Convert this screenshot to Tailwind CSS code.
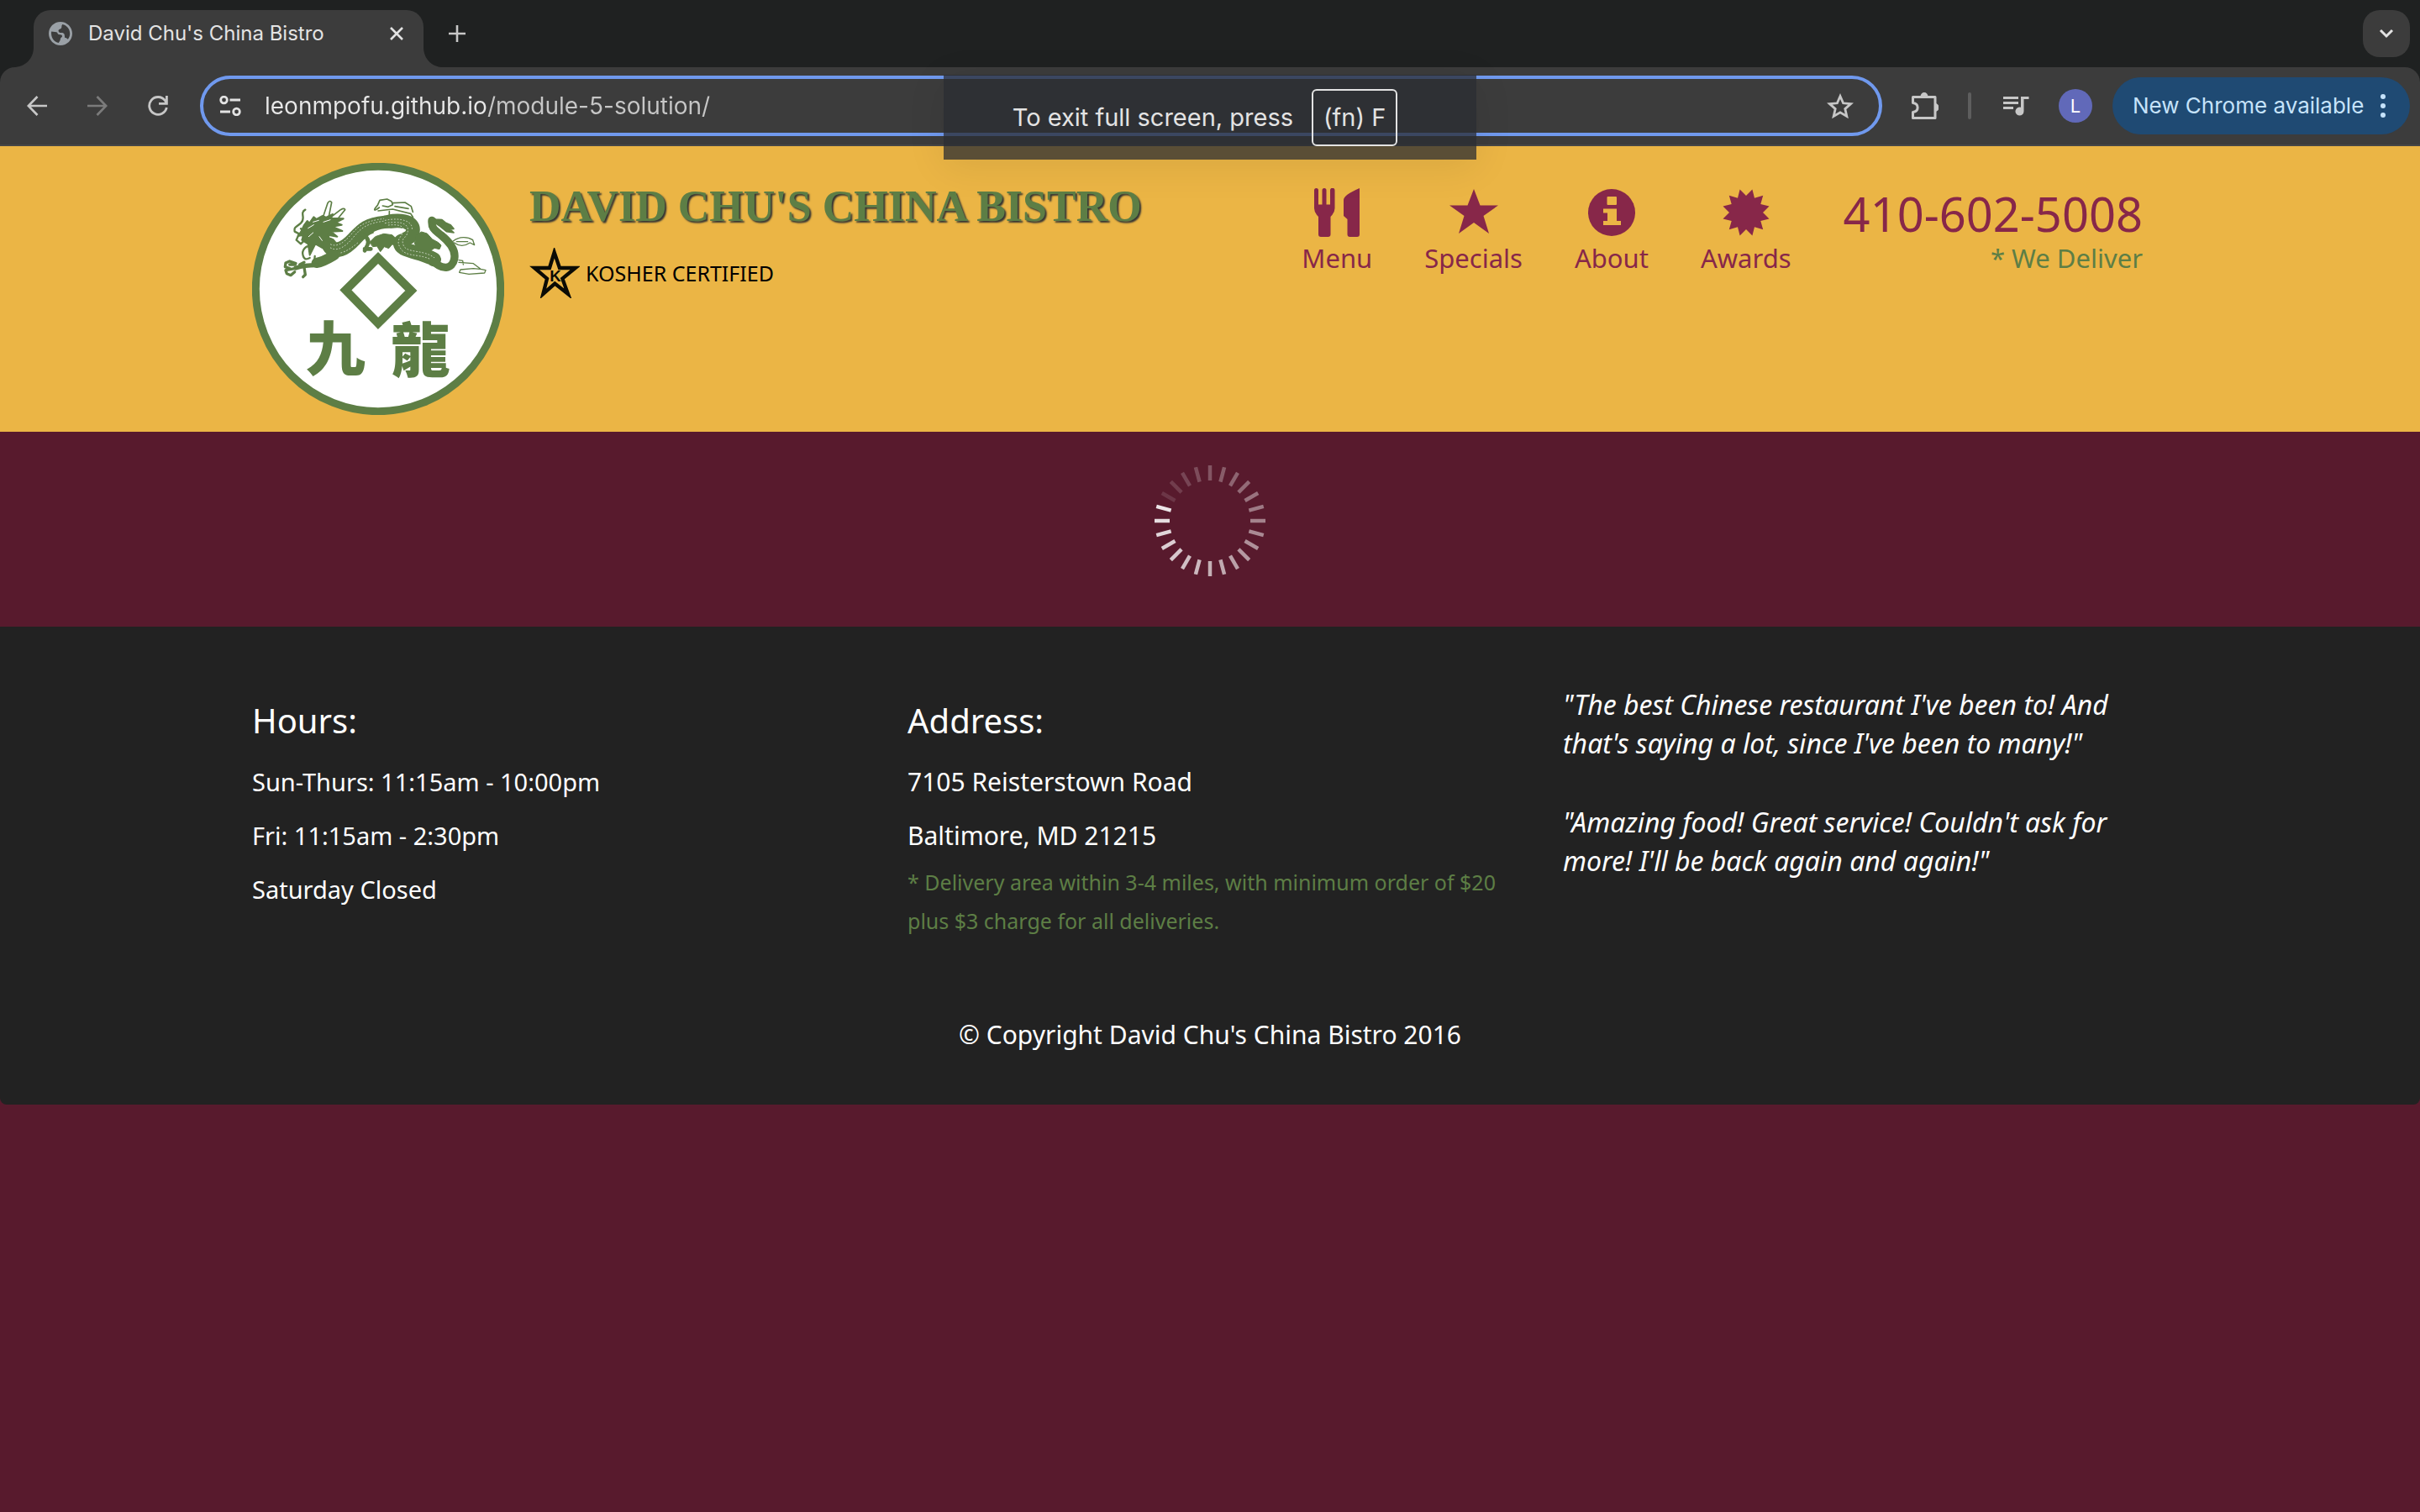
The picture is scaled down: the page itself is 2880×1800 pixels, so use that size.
<!DOCTYPE html>
<html lang="en">
<head>
<meta charset="utf-8">
<meta name="viewport" content="width=device-width, initial-scale=1">
<title>David Chu's China Bistro</title>
<script src="https://cdn.jsdelivr.net/npm/@tailwindcss/browser@4"></script>
</head>
<body class="relative min-h-screen bg-[#581a2d] font-['Noto_Sans',sans-serif] text-[30px] leading-[46px] text-white">

<!-- Browser chrome -->
<div class="bg-[#1f2121] font-['Inter',sans-serif]">
  <div class="flex h-20 items-end pl-4 pr-3">
    <svg class="h-6 w-6 shrink-0" viewBox="0 0 24 24" fill="#3c3c3c"><path d="M24 0v24H0C14 24 24 14 24 0z"/></svg>
    <div class="flex h-[68px] w-[464px] items-center rounded-t-[20px] bg-[#3c3c3c] pl-[18px] pr-4 pb-3">
      <svg class="h-7 w-7 shrink-0" viewBox="2 2 20 20" fill="#9aa0a6"><path d="M12 2C6.48 2 2 6.48 2 12s4.48 10 10 10 10-4.48 10-10S17.52 2 12 2zM4.200 12.300C4.100 11.600 4.100 11 4.300 10.200L8.600 10.700C9.600 11 9.500 12.600 10.600 12.800L12.600 13C13.600 13.300 13.800 14.600 12.800 15.300C11.700 16 12 17 11.700 17.800L10.400 19.800C7 19.200 4.400 16.200 4.200 12.300zM18.200 16.900C17.400 15.800 16.600 15.400 15.800 15.500C15.300 14 15.900 12.500 14.400 11.600C13 10.900 11.900 11.900 10.800 10.700C9.600 9.400 10.600 8.300 11.700 8C13 7.800 13 6.600 13 5.400L13.600 4.200C17.200 4.900 20 8 20 12C20 13.900 19.300 15.600 18.200 16.900z"/></svg>
      <span class="ml-[19px] flex-1 whitespace-nowrap text-2xl leading-8 text-[#e3e3e3]">David Chu's China Bistro</span>
      <button aria-label="Close tab" class="flex h-8 w-8 items-center justify-center">
        <svg class="h-4 w-4" viewBox="0 0 16 16" fill="none" stroke="#e3e3e3" stroke-width="2.600"><path d="M1 1l14 14M15 1L1 15"/></svg>
      </button>
    </div>
    <svg class="h-6 w-6 shrink-0" viewBox="0 0 24 24" fill="#3c3c3c"><path d="M0 0v24h24C10 24 0 14 0 0z"/></svg>
    <button aria-label="New tab" class="mb-5 flex h-10 w-8 items-center justify-center">
      <svg class="h-5 w-5" viewBox="0 0 20 20" fill="none" stroke="#c7c7c7" stroke-width="2.600"><path d="M10 0v20M0 10h20"/></svg>
    </button>
    <button aria-label="Search tabs" class="mb-3 ml-auto flex h-14 w-14 items-center justify-center rounded-[20px] bg-[#3c3c3c]">
      <svg class="h-3 w-[18px]" viewBox="0 0 18 12" fill="none" stroke="#e3e3e3" stroke-width="3"><path d="M2 2l7 7 7-7"/></svg>
    </button>
  </div>

  <div class="flex h-[94px] items-center rounded-t-[18px] border-b-2 border-[#464646] bg-[#3c3c3c] pl-2 pr-3">
    <button aria-label="Back" class="flex h-14 w-[72px] items-center justify-center">
      <svg class="h-6 w-6" viewBox="0 0 24 24" fill="none" stroke="#c7c7c7" stroke-width="2.700"><path d="M24 12H2M12.500 1L1.800 12l10.700 11"/></svg>
    </button>
    <button aria-label="Forward" class="flex h-14 w-[72px] items-center justify-center">
      <svg class="h-6 w-6" viewBox="0 0 24 24" fill="none" stroke="#7b7b7b" stroke-width="2.700"><path d="M0 12h22M11.500 1l10.700 11-10.700 11"/></svg>
    </button>
    <button aria-label="Reload" class="flex h-14 w-[72px] items-center justify-center">
      <svg class="h-6 w-6" viewBox="0 0 24 24" fill="none" stroke="#c7c7c7" stroke-width="2.800"><path d="M22.300 14A10.400 10.400 0 1 1 20.400 5.600L22 8.500M22.400 0v9.300H13"/></svg>
    </button>
    <div class="ml-[14px] flex h-[72px] flex-1 items-center rounded-full border-4 border-[#7099ee] pl-[19px] pr-[30px]">
      <svg class="h-6 w-[26px] shrink-0" viewBox="0 0 26 24" fill="none" stroke="#e3e3e3" stroke-width="2.800"><circle cx="5.500" cy="5" r="3.800"/><path d="M12.500 5H25M1 19h12"/><circle cx="20.500" cy="19" r="3.800"/></svg>
      <input aria-label="Web address" type="text" value="leonmpofu.github.io/module-5-solution/" class="ml-7 h-14 w-[640px] bg-[linear-gradient(90deg,#e8e8e8_264px,#c7c7c7_264px)] bg-clip-text text-[28px] leading-9 text-transparent outline-none">
      <button aria-label="Bookmark this tab" class="ml-auto flex h-10 w-8 items-center justify-center">
        <svg class="h-[30px] w-8" viewBox="0 0 32 30" fill="none" stroke="#c7c7c7" stroke-width="2.800"><path d="M16 3.500l3.600 8.300 9 .800-6.800 6 2 8.800L16 22.800l-7.800 4.600 2-8.800-6.800-6 9-.800z"/></svg>
      </button>
    </div>
    <button aria-label="Extensions" class="ml-[15px] flex h-14 w-[72px] items-center justify-center">
      <svg class="h-8 w-8" viewBox="0 0 32 32" fill="none"><path stroke="#c7c7c7" stroke-width="3" stroke-linejoin="round" d="M1.500 5.500H28V30.500H1.500V23.500C9 22.500 9 13.500 1.500 12.500z"/><path fill="#c7c7c7" d="M10.500 5a4.500 5 0 0 1 9 0zM28 13a4.500 5 0 0 1 0 10z"/></svg>
    </button>
    <div class="ml-[15px] h-8 w-1 rounded-full bg-[#5e5e5e]"></div>
    <button aria-label="Media controls" class="ml-[17px] flex h-14 w-[72px] items-center justify-center">
      <svg class="h-6 w-8" viewBox="0 0 32 24" fill="#c7c7c7"><path d="M1 1h18v3H1zM1 7h18v3H1zM1 13h12v3H1zM22 1h9.500v3H25.500v14.500a5 5 0 1 1-3.500-4.700z"/></svg>
    </button>
    <button aria-label="Profile" class="ml-[15px] h-10 w-10 rounded-full bg-[#6169b9] text-center text-[22px] leading-10 text-white">L</button>
    <button class="ml-6 flex h-[68px] w-[354px] items-center justify-between rounded-full bg-[#1f4a73] pl-6 pr-7 text-[26px] leading-8 text-[#c6e3fb]">
      <span class="whitespace-nowrap">New Chrome available</span>
      <svg class="h-7 w-2" viewBox="0 0 8 28" fill="#c6e3fb"><circle cx="4" cy="3" r="3"/><circle cx="4" cy="14" r="3"/><circle cx="4" cy="25" r="3"/></svg>
    </button>
  </div>
</div>

<!-- Full screen notice -->
<div class="absolute left-1/2 top-[89px] flex h-[101px] w-[634px] -translate-x-1/2 items-center justify-center gap-[22px] bg-[#2a2c31]/75 pr-3 font-['Inter',sans-serif] text-[29px] leading-9 text-[#e3e3e3] shadow-[0_8px_48px_rgba(0,0,0,0.08)]">
  <span class="whitespace-nowrap">To exit full screen, press</span>
  <kbd class="flex h-[68px] items-center whitespace-nowrap rounded-md border-2 border-[#e3e3e3] px-3 font-['Inter',sans-serif]">(fn) F</kbd>
</div>

<!-- Site header -->
<header class="bg-[#ebb545]">
  <div class="mx-auto flex max-w-[2340px] items-start px-[30px] py-5">
    <a href="#" aria-label="Home" class="shrink-0">
      <svg class="h-[300px] w-[300px]" viewBox="60 42 900 900">
        <circle cx="510" cy="492" r="437" fill="#fff" stroke="#5d7e45" stroke-width="27"/>
        <path d="M510 381L628 498 510 615 394 496z" fill="none" stroke="#5d7e45" stroke-width="30"/>
        <g transform="translate(150 135)" fill="none" stroke="#5d7e45" stroke-linecap="round" stroke-linejoin="round">
          <!-- body and tail -->
          <path stroke-width="54" d="M185 200C205 235 245 210 275 178S320 128 385 122"/>
          <path stroke-width="50" d="M385 120C430 108 490 112 484 150S430 175 440 200 520 225 560 252"/>
          <path stroke-width="28" d="M550 250C590 295 625 285 632 250S610 185 585 165 550 140 552 112"/>
          <path fill="#5d7e45" stroke-width="3" d="M330 190l20-20 30-10 30 4 22 20-4 16-18-2-12 14-16-6-14 18-12-20-14 2zM495 165l20-12 20 6 18 20 22 12 10 10-6 14-18-4-20 14-30-8-20-20z"/>
          <path stroke="#fff" stroke-width="12" d="M350 157C380 142 420 144 440 154"/>
          <g stroke="#fff" stroke-width="2" stroke-dasharray="3 8">
            <path d="M190 210C215 225 245 205 272 172S320 122 385 114"/>
            <path stroke-dashoffset="5" d="M185 195C210 210 235 195 262 164S310 115 380 106M200 228C225 235 255 220 290 190"/>
            <path d="M385 112C440 100 490 115 480 150M385 122C430 114 470 120 466 150S440 170 450 200 520 215 560 245"/>
            <path stroke-dashoffset="4" d="M390 130C420 125 455 128 450 150S420 180 440 212 500 230 545 250"/>
          </g>
          <!-- head, mane and whiskers -->
          <path fill="#5d7e45" stroke-width="6" d="M95 130l12-16 8 8 15-22 10 8 22-12 12 6 24-12-6 14 44 2-28 14 22 8-34 6 36 16-40 2 22 18-34-6 10 22-26-6-4 30-24-14-20 40-6-40-22-14 6-18-20 4 12-18z"/>
          <path stroke="#fff" stroke-width="3" d="M110 140l20-12M128 118l20-6M112 170l16-14M165 118l24-8M150 170l10 14"/>
          <path stroke-width="5" d="M162 104L180 50Q188 38 194 48L184 98M184 106L226 74Q240 66 242 74L208 116"/>
          <path stroke-width="7" d="M100 74C78 85 104 105 84 122S60 135 62 152L78 160 68 182 84 196 98 182 104 160M84 142l18 12-10 16"/>
          <path stroke-width="7" d="M122 205C100 200 86 220 92 238S106 250 116 246M134 240l-2 22"/>
          <path stroke-width="36" d="M205 235C180 250 165 260 140 264"/>
          <path stroke-width="16" d="M140 272C110 272 85 276 66 282"/>
          <path stroke-width="10" d="M66 266L44 258 30 264 28 278 44 284M62 284L30 290 34 302 48 308 62 296M96 280l4 26-8 8M44 270h20M80 270l16-8"/>
          <path stroke-width="14" d="M300 160C320 170 330 182 322 200M320 204l-8 16M312 214h22"/>
          <!-- fins and tail tip -->
          <path stroke-width="5" d="M364 66C346 80 340 78 358 58L366 40 392 36 408 44 412 56 396 64 376 60M360 78L412 72 476 88 484 100M412 50L456 48 478 62 484 82M420 62l48 8M400 80v16l56 2"/>
          <path fill="#5d7e45" stroke-width="5" d="M542 108l10-6 14 6 22 2 12 10 18 8 12 14-14 2 14 12-26-4-22-18-20-14-12 10z"/>
          <path stroke-width="4" d="M628 186C650 168 680 170 698 182L704 200 688 192C670 204 650 206 632 192M640 188h40M648 262l52 4 26 20 18 4-4 10-56 4-34-6 4-10 46-4 24 2M648 254l14 2 2 14"/>
        </g>
        <g fill="#5d7e45" font-family="'Noto Sans CJK TC', sans-serif" font-weight="900" font-size="212" text-anchor="middle">
          <text x="358" y="784">九</text>
          <text x="662" y="790">龍</text>
        </g>
      </svg>
    </a>

    <div class="ml-[30px] pt-[22px]">
      <h1 class="whitespace-nowrap font-['Liberation_Serif',serif] text-[52px] font-bold leading-[60px] text-[#5d7e45] [text-shadow:2px_2px_2px_#333]"><a href="#">DAVID CHU'S CHINA BISTRO</a></h1>
      <p class="mt-[19px] flex items-center gap-[7px] whitespace-nowrap text-[25px] leading-9 text-black">
        <svg class="h-[60px] w-[60px]" viewBox="0 0 180 180"><path fill="none" stroke="#0b0b05" stroke-width="13" d="M89 16L108 72H164L118 110 138 165 91 128 49 165 63 110 18 72H72z"/><text x="93" y="121" text-anchor="middle" font-family="Liberation Sans, sans-serif" font-weight="bold" font-size="56" fill="#0b0b05">K</text></svg>
        KOSHER CERTIFIED
      </p>
    </div>

    <nav class="ml-auto flex gap-[62px] whitespace-nowrap pr-[30px] pt-[30px] text-[31px] leading-[45px] text-[#872749]">
      <a href="#" class="flex flex-col items-center gap-[3px]">
        <svg class="h-[58px] w-[54px]" viewBox="0 0 54 58" fill="currentColor"><path d="M0 2.500a2.500 2.500 0 0 1 5 0V19.500h4.500V2.500a2.500 2.500 0 0 1 5 0V19.500H19V2.500a2.500 2.500 0 0 1 5.500 0V24Q24.500 29 19.500 34V55Q19.500 58 16.500 58H8Q5 58 5 55V34Q0 29 0 24zM54 0V55Q54 58 51 58H42.500Q39.500 58 39.500 55V37L35 33V14Q35 8 54 0z"/></svg>
        Menu</a>
      <a href="#" class="flex flex-col items-center gap-[3px]">
        <svg class="h-[58px] w-[58px]" viewBox="0 0 58 58" fill="currentColor"><path d="M29 1L36.500 20.500H58L40.500 33 47 54 29 41 11 54 17.500 33 0 20.500H21.500z"/></svg>
        Specials</a>
      <a href="#" class="flex flex-col items-center gap-[3px]">
        <svg class="h-[58px] w-14" viewBox="0 0 56 58"><circle cx="28" cy="29" r="28" fill="currentColor"/><path fill="#ebb545" d="M23.500 10H33Q34 10 34 11V19Q34 20 33 20H23.500Q22.500 20 22.500 19V11Q22.500 10 23.500 10zM18 24.500H34V39H39V44H18V39H23V29.500H18z"/></svg>
        About</a>
      <a href="#" class="flex flex-col items-center gap-[3px]">
        <svg class="h-[58px] w-14" viewBox="-28 -29 56 58" fill="currentColor"><path d="M0-20L7.400-27.500 10-17.300 20.200-20.200 17.300-10 27.500-7.400 20 0 27.500 7.400 17.300 10 20.200 20.200 10 17.300 7.400 27.500 0 20-7.400 27.500-10 17.300-20.200 20.200-17.300 10-27.500 7.400-20 0-27.500-7.400-17.300-10-20.200-20.200-10-17.300-7.400-27.500z"/></svg>
        Awards</a>
      <div class="text-right">
        <a href="tel:410-602-5008" class="block text-[56px] leading-[61px]">410-602-5008</a>
        <div class="text-[#5d7e45]">* We Deliver</div>
      </div>
    </nav>
  </div>
</header>

<!-- Loading indicator -->
<main class="flex justify-center pb-[60px] pt-10">
  <svg id="spinner" role="img" aria-label="Loading" class="h-[132px] w-[132px]" viewBox="-66 -66 132 132" stroke="#fff" stroke-width="4.500"></svg>
</main>

<footer class="rounded-b-lg bg-[#222] pb-[60px] pt-[70px]">
  <div class="mx-auto max-w-[2340px]">
    <div class="grid grid-cols-3">
      <section class="px-[30px] pt-5">
        <h2 class="mb-7 text-[40px] leading-[44px]">Hours:</h2>
        <div class="flex flex-col gap-[18px] text-[29px]">
          <p>Sun-Thurs: 11:15am - 10:00pm</p>
          <p>Fri: 11:15am - 2:30pm</p>
          <p>Saturday Closed</p>
        </div>
      </section>
      <section class="px-[30px] pt-5">
        <h2 class="mb-7 text-[40px] leading-[44px]">Address:</h2>
        <div class="flex flex-col gap-[18px]">
          <p>7105 Reisterstown Road</p>
          <p>Baltimore, MD 21215</p>
        </div>
        <p class="mt-[9px] text-[25px] text-[#5d7e45]">* Delivery area within 3-4 miles, with minimum order of $20<br>plus $3 charge for all deliveries.</p>
      </section>
      <section class="flex flex-col gap-12 px-[30px] text-[32px] italic">
        <p>"The best Chinese restaurant I've been to! And<br>that's saying a lot, since I've been to many!"</p>
        <p>"Amazing food! Great service! Couldn't ask for<br>more! I'll be back again and again!"</p>
      </section>
    </div>
    <p class="mt-[90px] text-center">© Copyright David Chu's China Bistro 2016</p>
  </div>
</footer>

<script>
  // 24 spokes, fading anticlockwise from the brightest one
  const spinner = document.getElementById('spinner');
  for (let i = 0; i < 24; i++) {
    const spoke = document.createElementNS('http://www.w3.org/2000/svg', 'line');
    spoke.setAttribute('y1', -66);
    spoke.setAttribute('y2', -48);
    spoke.setAttribute('opacity', 0.12 + 0.77 * i / 23);
    spoke.setAttribute('transform', `rotate(${300 + 15 * i})`);
    spinner.append(spoke);
  }
</script>
</body>
</html>
